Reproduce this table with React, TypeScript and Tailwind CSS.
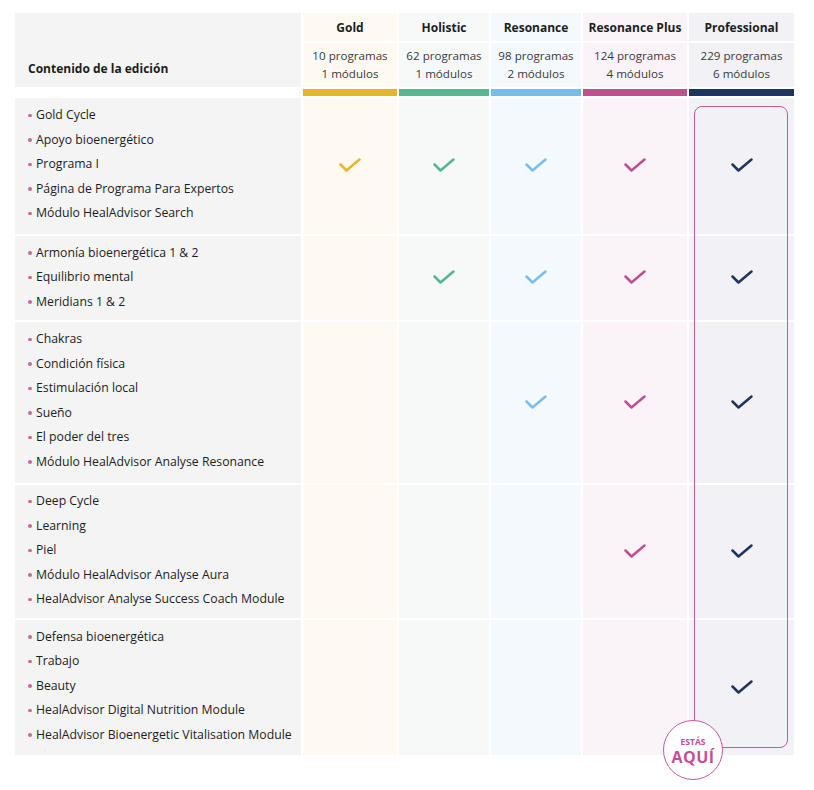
import React from "react";

type Edition = {
  name: string;
  programs: string;
  modules: string;
  bar: string;
  tint: string;
  check: string;
  width: string;
};

const editions: Edition[] = [
  { name: "Gold", programs: "10 programas", modules: "1 módulos", bar: "bg-[#e3b52f]", tint: "bg-[#fefaf1]", check: "#e6b62c", width: "w-[94px]" },
  { name: "Holistic", programs: "62 programas", modules: "1 módulos", bar: "bg-[#58b793]", tint: "bg-[#f7f9f9]", check: "#55b690", width: "w-[90px]" },
  { name: "Resonance", programs: "98 programas", modules: "2 módulos", bar: "bg-[#76bde8]", tint: "bg-[#f4f9fd]", check: "#78bfea", width: "w-[90px]" },
  { name: "Resonance Plus", programs: "124 programas", modules: "4 módulos", bar: "bg-[#bd5190]", tint: "bg-[#faf4f9]", check: "#bf4f92", width: "w-[104px]" },
  { name: "Professional", programs: "229 programas", modules: "6 módulos", bar: "bg-[#1c355e]", tint: "bg-[#f1f1f6]", check: "#1d3461", width: "w-[105px]" },
];

// first edition that contains the group
const groups: { items: string[]; from: number; pad: string }[] = [
  {
    from: 0,
    pad: "pt-[5px] pb-[8px]",
    items: [
      "Gold Cycle",
      "Apoyo bioenergético",
      "Programa I",
      "Página de Programa Para Expertos",
      "Módulo HealAdvisor Search",
    ],
  },
  {
    from: 1,
    pad: "pt-[5px] pb-[6px]",
    items: ["Armonía bioenergética 1 & 2", "Equilibrio mental", "Meridians 1 & 2"],
  },
  {
    from: 2,
    pad: "pt-[5px] pb-[9px]",
    items: [
      "Chakras",
      "Condición física",
      "Estimulación local",
      "Sueño",
      "El poder del tres",
      "Módulo HealAdvisor Analyse Resonance",
    ],
  },
  {
    from: 3,
    pad: "pt-[4px] pb-[6px]",
    items: [
      "Deep Cycle",
      "Learning",
      "Piel",
      "Módulo HealAdvisor Analyse Aura",
      "HealAdvisor Analyse Success Coach Module",
    ],
  },
  {
    from: 4,
    pad: "pt-[5px] pb-[8px]",
    items: [
      "Defensa bioenergética",
      "Trabajo",
      "Beauty",
      "HealAdvisor Digital Nutrition Module",
      "HealAdvisor Bioenergetic Vitalisation Module",
    ],
  },
];

function Check({ color }: { color: string }) {
  return (
    <svg width="22" height="15" viewBox="0 0 22 15" className="mx-auto block">
      <polyline
        points="1.5,6.5 7.5,12.5 20.5,1.5"
        fill="none"
        stroke={color}
        strokeWidth="2.5"
        strokeLinecap="round"
        strokeLinejoin="round"
      />
    </svg>
  );
}

export default function App() {
  return (
    <div className="min-h-[790px] bg-white pl-[13px] pt-[11px] font-['Open_Sans','Noto_Sans',sans-serif] text-[12.25px] text-[#1d1d1d]">
      <div className="relative w-[783px]">
        <table className="table-fixed border-separate border-spacing-[2px]">
          <thead>
            <tr>
              <th rowSpan={2} className="w-[286px] bg-[#f4f4f4] pb-[9px] pl-[13px] text-left align-bottom text-[12px] font-bold">
                Contenido de la edición
              </th>
              {editions.map((e) => (
                <th key={e.name} className={`${e.width} ${e.tint} h-[28px] p-0 pt-[1px] text-center align-middle text-[12px] font-bold`}>
                  {e.name}
                </th>
              ))}
            </tr>
            <tr>
              {editions.map((e) => (
                <td key={e.name} className={`${e.tint} h-[44px] p-0 text-center align-middle text-[11.6px] leading-[18px] text-[#3a3a3a]`}>
                  <div>{e.programs}</div>
                  <div>{e.modules}</div>
                </td>
              ))}
            </tr>
            <tr>
              <td className="h-[7px] p-0" />
              {editions.map((e) => (
                <td key={e.name} className={`${e.bar} h-[7px] p-0`} />
              ))}
            </tr>
          </thead>
          <tbody>
            {groups.map((g, gi) => (
              <tr key={gi}>
                <td className={`bg-[#f4f4f4] ${g.pad} pl-[13px] align-top`}>
                  <ul>
                    {g.items.map((it) => (
                      <li key={it} className="flex h-[24.5px] items-center leading-[24.5px]">
                        <span className="mr-[4.5px] inline-block h-[3.5px] w-[3.5px] rounded-full bg-[#d0649f]" />
                        {it}
                      </li>
                    ))}
                  </ul>
                </td>
                {editions.map((e, ei) => (
                  <td key={e.name} className={`${e.tint} p-0 align-middle`}>
                    {ei >= g.from && <Check color={e.check} />}
                  </td>
                ))}
              </tr>
            ))}
          </tbody>
        </table>

        {/* current edition frame */}
        <div className="pointer-events-none absolute left-[681px] top-[95px] h-[642px] w-[94px] rounded-[8px] border-[1.5px] border-[#c4599e]" />
        <div className="absolute left-[650px] top-[709px] flex h-[60px] w-[60px] flex-col items-center justify-center gap-[4px] rounded-full border-[1.5px] border-[#c4599e] bg-white pt-[1px] font-bold text-[#c4509a]">
          <span className="text-[8.5px] leading-[9px]">ESTÁS</span>
          <span className="text-[16px] leading-[15px] tracking-[0.5px]">AQUÍ</span>
        </div>
      </div>
    </div>
  );
}
